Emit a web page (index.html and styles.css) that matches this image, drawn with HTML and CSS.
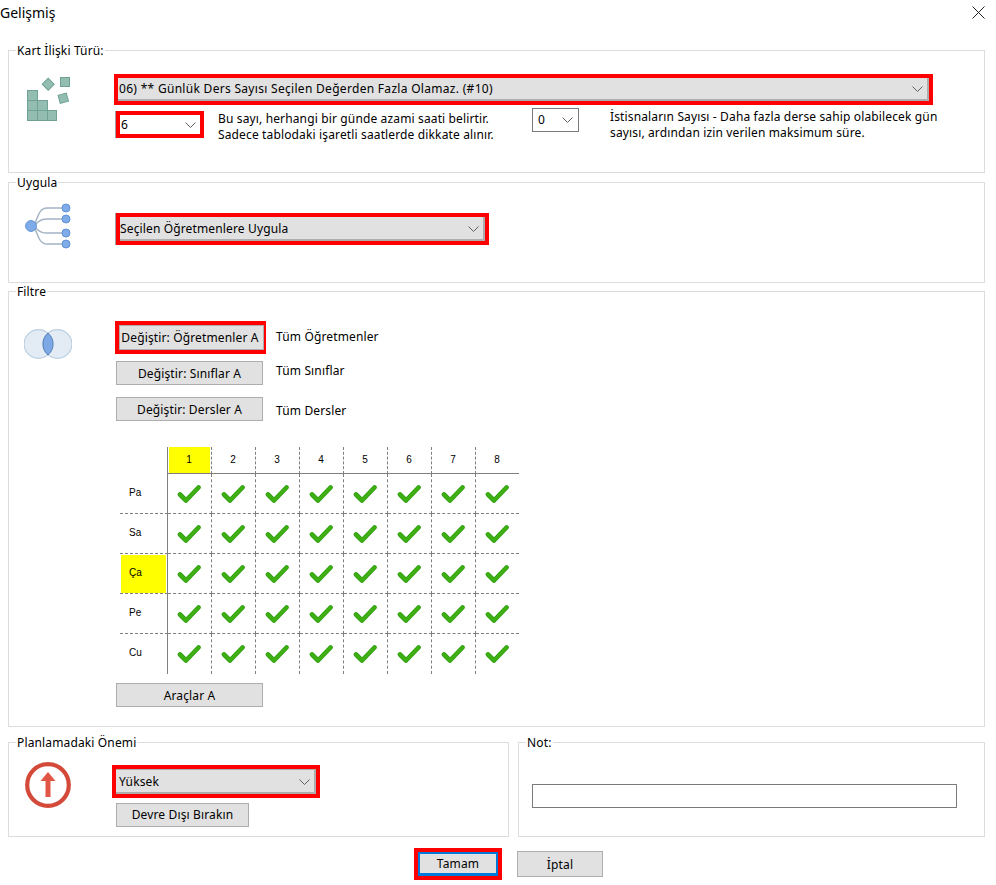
FILE: index.html
```html
<!DOCTYPE html>
<html lang="tr">
<head>
<meta charset="utf-8">
<title>Gelişmiş</title>
<link rel="stylesheet" href="styles.css">
</head>
<body>
<svg class="defs" width="0" height="0" aria-hidden="true">
  <symbol id="chev" viewBox="0 0 11 6"><path d="M.5.5l5 5 5-5" fill="none" stroke="#606060" stroke-width="1"/></symbol>
  <symbol id="check" viewBox="0 0 24 20"><path d="M3 10.5l6 6L21.5 3.5" fill="none" stroke="#2f9f10" stroke-width="4.6" stroke-linecap="round" stroke-linejoin="round"/><path d="M3 10.5l6 6L21.5 3.5" fill="none" stroke="#3fb012" stroke-width="3" stroke-linecap="round" stroke-linejoin="round"/></symbol>
</svg>
<div class="dialog">
  <header class="titlebar">
    <span class="title">Gelişmiş</span>
    <svg class="close" viewBox="0 0 13 13" width="13" height="13"><path d="M.5.5l12 12M12.5.5l-12 12" stroke="#222" stroke-width="1" fill="none"/></svg>
  </header>

  <section class="group g1">
    <span class="legend">Kart İlişki Türü:</span>
    <svg class="icon icon1" viewBox="0 0 46 46" width="46" height="46">
      <g fill="#92bdb0" stroke="#6fa295" stroke-width="1">
        <rect x="1.5" y="14.5" width="10" height="10"/><rect x="1.5" y="24.5" width="10" height="10"/><rect x="11.5" y="24.5" width="10" height="10"/><rect x="1.5" y="34.5" width="10" height="10"/><rect x="11.5" y="34.5" width="10" height="10"/><rect x="21.5" y="34.5" width="9" height="10"/>
        <rect x="34.5" y="1.5" width="9" height="9"/>
        <rect x="18" y="4" width="8.5" height="8.5" transform="rotate(45 22.2 8.2)"/>
        <rect x="33" y="18" width="8.5" height="8.5" transform="rotate(-15 37.2 22.2)"/>
      </g>
    </svg>
    <div class="content">
      <div class="red wide-red"><div class="combo gray wide"><span>06) ** Günlük Ders Sayısı Seçilen Değerden Fazla Olamaz. (#10)</span><svg class="chev"><use href="#chev"/></svg></div></div>
      <div class="limits">
        <div class="red small-red"><div class="combo small"><span>6</span><svg class="chev"><use href="#chev"/></svg></div></div>
        <p class="hint hint1">Bu sayı, herhangi bir günde azami saati belirtir.<br>Sadece tablodaki işaretli saatlerde dikkate alınır.</p>
        <div class="combo plain"><span>0</span><svg class="chev"><use href="#chev"/></svg></div>
        <p class="hint hint2">İstisnaların Sayısı - Daha fazla derse sahip olabilecek gün<br>sayısı, ardından izin verilen maksimum süre.</p>
      </div>
    </div>
  </section>

  <section class="group g2">
    <span class="legend">Uygula</span>
    <svg class="icon icon2" viewBox="0 0 46 46" width="46" height="46">
      <g fill="none" stroke="#a3b3c4" stroke-width="1.4">
        <path d="M6 23C13 23 11 5 22 5H41"/><path d="M6 23C13 23 11 16 22 16H41"/><path d="M6 23C13 23 11 30 22 30H41"/><path d="M6 23C13 23 11 41 22 41H41"/>
      </g>
      <g fill="#7fabe8" stroke="#5f92d6" stroke-width="1">
        <circle cx="6" cy="23" r="5.4"/><circle cx="41" cy="5" r="4"/><circle cx="41" cy="16" r="4"/><circle cx="41" cy="30" r="4"/><circle cx="41" cy="41" r="4"/>
      </g>
    </svg>
    <div class="content">
      <div class="red apply-red"><div class="combo gray"><span>Seçilen Öğretmenlere Uygula</span><svg class="chev"><use href="#chev"/></svg></div></div>
    </div>
  </section>

  <section class="group g3">
    <span class="legend">Filtre</span>
    <svg class="icon icon3" viewBox="0 0 48 30" width="48" height="30">
      <circle cx="14.5" cy="15" r="14.4" fill="#e3ecf4" stroke="#bccfe0" stroke-width="1.2"/>
      <circle cx="33.5" cy="15" r="14.4" fill="#e3ecf4" stroke="#bccfe0" stroke-width="1.2"/>
      <path d="M24 4C28 8 29 11 29 15S28 22 24 26C20 22 19 19 19 15S20 8 24 4Z" fill="#7ea8e4" stroke="#4f7cb8" stroke-width="1"/>
    </svg>
    <div class="content">
      <div class="filter-row first">
        <div class="red button-red"><button class="btn">Değiştir: Öğretmenler A</button></div>
        <span class="filter-label l1">Tüm Öğretmenler</span>
      </div>
      <div class="filter-row second">
        <button class="btn">Değiştir: Sınıflar A</button>
        <span class="filter-label l2">Tüm Sınıflar</span>
      </div>
      <div class="filter-row third">
        <button class="btn">Değiştir: Dersler A</button>
        <span class="filter-label l3">Tüm Dersler</span>
      </div>
      <div class="grid">
        <div class="hd corner"></div>
        <div class="hd sel"><span>1</span></div><div class="hd">2</div><div class="hd">3</div><div class="hd">4</div><div class="hd">5</div><div class="hd">6</div><div class="hd">7</div><div class="hd last">8</div>

        <div class="day">Pa</div>
        <div class="cell"><svg class="check"><use href="#check"/></svg></div><div class="cell"><svg class="check"><use href="#check"/></svg></div><div class="cell"><svg class="check"><use href="#check"/></svg></div><div class="cell"><svg class="check"><use href="#check"/></svg></div><div class="cell"><svg class="check"><use href="#check"/></svg></div><div class="cell"><svg class="check"><use href="#check"/></svg></div><div class="cell"><svg class="check"><use href="#check"/></svg></div><div class="cell last"><svg class="check"><use href="#check"/></svg></div>

        <div class="day">Sa</div>
        <div class="cell"><svg class="check"><use href="#check"/></svg></div><div class="cell"><svg class="check"><use href="#check"/></svg></div><div class="cell"><svg class="check"><use href="#check"/></svg></div><div class="cell"><svg class="check"><use href="#check"/></svg></div><div class="cell"><svg class="check"><use href="#check"/></svg></div><div class="cell"><svg class="check"><use href="#check"/></svg></div><div class="cell"><svg class="check"><use href="#check"/></svg></div><div class="cell last"><svg class="check"><use href="#check"/></svg></div>

        <div class="day sel-day"><span>Ça</span></div>
        <div class="cell"><svg class="check"><use href="#check"/></svg></div><div class="cell"><svg class="check"><use href="#check"/></svg></div><div class="cell"><svg class="check"><use href="#check"/></svg></div><div class="cell"><svg class="check"><use href="#check"/></svg></div><div class="cell"><svg class="check"><use href="#check"/></svg></div><div class="cell"><svg class="check"><use href="#check"/></svg></div><div class="cell"><svg class="check"><use href="#check"/></svg></div><div class="cell last"><svg class="check"><use href="#check"/></svg></div>

        <div class="day">Pe</div>
        <div class="cell"><svg class="check"><use href="#check"/></svg></div><div class="cell"><svg class="check"><use href="#check"/></svg></div><div class="cell"><svg class="check"><use href="#check"/></svg></div><div class="cell"><svg class="check"><use href="#check"/></svg></div><div class="cell"><svg class="check"><use href="#check"/></svg></div><div class="cell"><svg class="check"><use href="#check"/></svg></div><div class="cell"><svg class="check"><use href="#check"/></svg></div><div class="cell last"><svg class="check"><use href="#check"/></svg></div>

        <div class="day end">Cu</div>
        <div class="cell end"><svg class="check"><use href="#check"/></svg></div><div class="cell end"><svg class="check"><use href="#check"/></svg></div><div class="cell end"><svg class="check"><use href="#check"/></svg></div><div class="cell end"><svg class="check"><use href="#check"/></svg></div><div class="cell end"><svg class="check"><use href="#check"/></svg></div><div class="cell end"><svg class="check"><use href="#check"/></svg></div><div class="cell end"><svg class="check"><use href="#check"/></svg></div><div class="cell end last"><svg class="check"><use href="#check"/></svg></div>
      </div>
      <button class="btn tools">Araçlar A</button>
    </div>
  </section>

  <div class="bottom">
    <section class="group g4">
      <span class="legend">Planlamadaki Önemi</span>
      <svg class="icon icon4" viewBox="0 0 46 46" width="46" height="46">
        <circle cx="23" cy="23" r="20.8" fill="#fff" stroke="#d44a3a" stroke-width="4.2"/>
        <path d="M20.5 35V19H15.5L23 10L30.5 19H25.5V35Z" fill="#e25443"/>
      </svg>
      <div class="content">
        <div class="red priority-red"><div class="combo gray"><span>Yüksek</span><svg class="chev"><use href="#chev"/></svg></div></div>
        <button class="btn disable">Devre Dışı Bırakın</button>
      </div>
    </section>
    <section class="group g5">
      <span class="legend">Not:</span>
      <input class="note" type="text" aria-label="Not">
    </section>
  </div>

  <footer class="actions">
    <div class="red ok-red"><button class="btn ok">Tamam</button></div>
    <button class="btn cancel">İptal</button>
  </footer>
</div>
</body>
</html>
```
FILE: styles.css
```css
* { box-sizing: border-box; }
html, body { margin: 0; padding: 0; background: #fff; }
body { width: 996px; height: 885px; overflow: hidden; font: 12px/16px "Noto Sans", "DejaVu Sans", sans-serif; letter-spacing: .14px; color: #000; }
.defs { position: absolute; }
.dialog { display: flex; flex-direction: column; }
.titlebar { height: 50px; display: flex; justify-content: space-between; padding: 6px 11px 0 0; align-items: flex-start; }
.title { font-size: 14px; line-height: 14px; letter-spacing: 0; }
.group { position: relative; border: 1px solid #dcdcdc; margin-left: 8px; display: flex; align-items: flex-start; }
.legend { position: absolute; left: 7px; top: -8px; background: #fff; padding: 0 1px; line-height: 16px; white-space: nowrap; }
.icon { flex: none; }
.content { flex: none; }
.g1 { width: 977px; height: 123px; margin-bottom: 9px; padding-top: 23px; }
.icon1 { margin: 2px 42px 0 17px; }
.g2 { width: 977px; height: 101px; margin-bottom: 8px; padding-top: 30px; }
.icon2 { margin: -10px 43px 0 16px; }
.g3 { width: 977px; height: 436px; margin-bottom: 15px; padding-top: 29px; }
.icon3 { margin: 8px 42px 0 15px; }
.bottom { display: flex; gap: 9px; height: 95px; margin-bottom: 11px; }
.g4 { width: 501px; height: 95px; padding-top: 22px; }
.icon4 { margin: -3px 41px 0 16px; }
.g5 { width: 467px; height: 95px; margin-left: 0; padding: 41px 0 0 13px; }

.red { border: 4px solid #f00; }
.combo { display: flex; align-items: center; justify-content: space-between; white-space: nowrap; }
.combo .chev { width: 11px; height: 6px; flex: none; }
.gray { background: #e1e1e1; border-right: 2px solid #adadad; border-bottom: 2px solid #adadad; height: 100%; padding: 1px 4px 0 0; }
.wide-red { width: 819px; height: 31px; }
.wide span { letter-spacing: .3px; padding-left: 1px; }
.limits { display: flex; align-items: flex-start; margin-top: 3px; }
.small-red { width: 88px; height: 27px; margin: 3px 14px 0 2px; box-shadow: -1px 0 0 #a0a0a0; }
.small { height: 100%; padding: 0 4px 0 1px; }
.hint { margin: 0; white-space: nowrap; }
.hint1 { width: 314px; margin-top: 3px; }
.plain { width: 47px; height: 24px; border: 1px solid #7a7a7a; padding: 0 5px 0 5px; flex: none; }
.hint2 { margin: 1px 0 0 31px; }
.apply-red { width: 373px; height: 32px; margin-left: 2px; box-shadow: -1px 0 0 #a0a0a0; }

.btn { display: block; width: 147px; height: 24px; background: #e1e1e1; border: 1px solid #adadad; padding: 1px 0 0; font: inherit; letter-spacing: inherit; color: #000; white-space: nowrap; }
.filter-row { display: flex; align-items: flex-start; padding-left: 2px; }
.first { margin-left: -1px; }
.button-red { width: 151px; height: 33px; }
.button-red .btn { width: 145px; height: 25px; padding: 0 3px 0 0; }
.filter-label { line-height: 16px; }
.l1 { margin: 8px 0 0 10px; }
.l2 { margin: 2px 0 0 13px; }
.l3 { margin: 6px 0 0 13px; }
.second { margin-top: 7px; }
.third { margin-top: 12px; }

.grid { display: grid; grid-template-columns: 48px repeat(7, 44px) 43px; grid-template-rows: 27px repeat(5, 40px); margin: 26px 0 0 6px; width: 399px; font: 10px/12px "Liberation Sans", Arial, sans-serif; letter-spacing: 0; }
.hd { display: flex; align-items: center; justify-content: center; padding-right: 1px; border-right: 1px dashed #808080; border-bottom: 1px solid #808080; }
.hd.corner { border: 0; border-right: 1px solid #808080; }
.hd.last { border-right: 0; padding-right: 1px; }
.hd.sel { padding: 0 1px 0 1px; }
.hd.sel span { display: flex; align-items: center; justify-content: center; width: 100%; height: 100%; background: #ff0; padding-right: 1px; }
.day { display: flex; align-items: center; padding: 0 0 2px 9px; border-right: 1px solid #808080; border-bottom: 1px dashed #808080; }
.day.sel-day { padding: 1px 1px 0 1px; }
.sel-day span { display: flex; align-items: center; width: 100%; height: 100%; background: #ff0; padding: 0 0 2px 8px; }
.cell { display: flex; align-items: center; justify-content: center; padding-right: 1px; border-right: 1px dashed #808080; border-bottom: 1px dashed #808080; }
.cell.last { border-right: 0; padding-right: 1px; }
.cell.end, .day.end { border-bottom: 0; }
.check { width: 24px; height: 20px; }
.tools { margin: 9px 0 0 2px; }
.priority-red { width: 208px; height: 33px; }
.priority-red .combo { border-top: 1px solid #adadad; padding: 2px 4px 0 3px; }
.disable { width: 133px; margin: 5px 0 0 4px; padding: 0; }
.note { display: block; width: 425px; height: 24px; border: 1px solid #7a7a7a; background: #fff; padding: 0; }
.actions { display: flex; align-items: flex-start; padding-left: 414px; }
.ok-red { width: 88px; height: 32px; }
.ok { width: 100%; height: 100%; border: 2px solid #0078d7; border-bottom-width: 3px; }
.cancel { width: 86px; height: 26px; margin: 3px 0 0 15px; }
```
